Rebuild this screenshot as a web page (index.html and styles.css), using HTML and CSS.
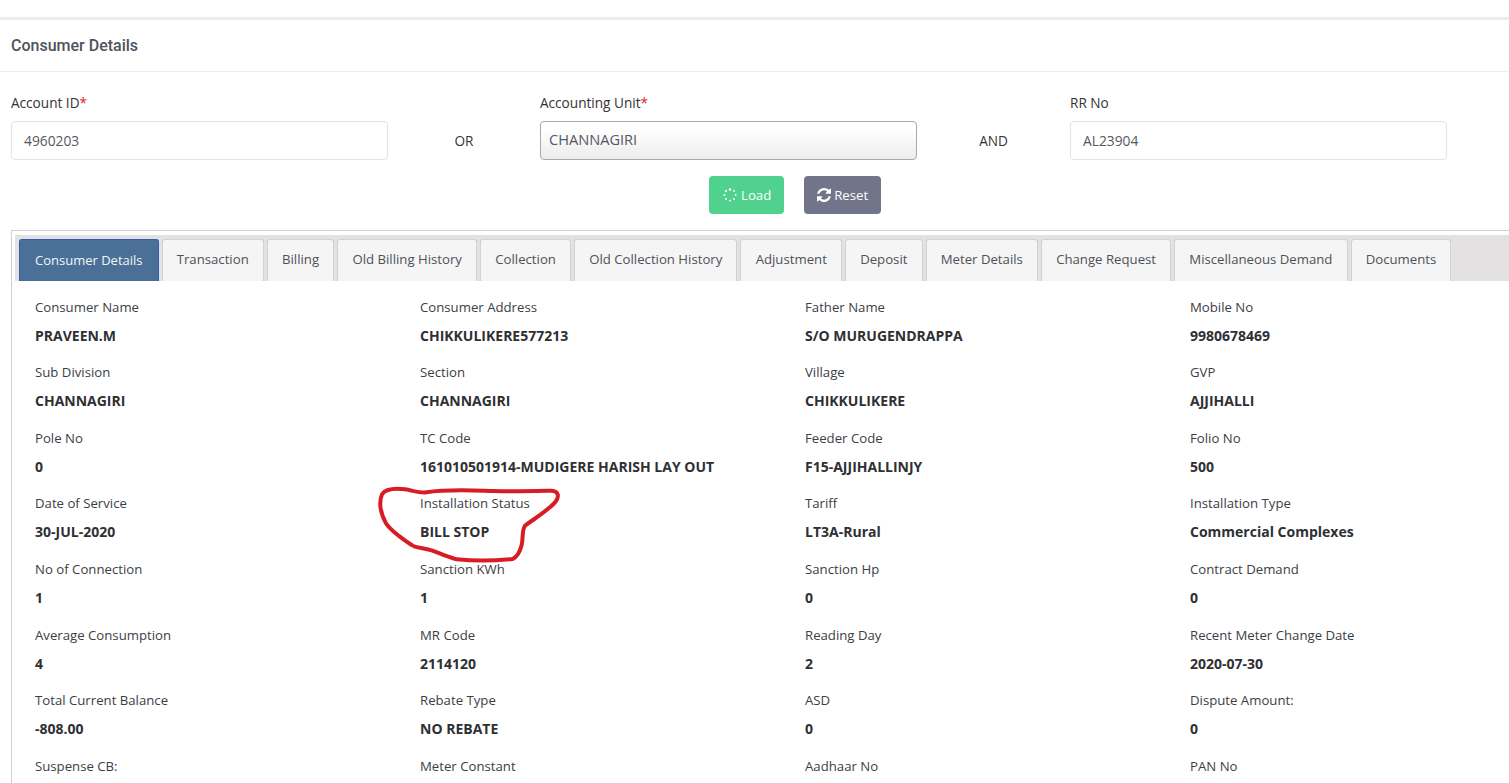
FILE: index.html
```html
<!DOCTYPE html>
<html lang="en">
<head>
<meta charset="utf-8">
<title>Consumer Details</title>
<link rel="stylesheet" href="styles.css">
</head>
<body>
<div class="card">
  <div class="card-head">Consumer Details</div>
  <form class="form">
    <div class="form-row">
      <div class="field">
        <label class="lbl">Account ID<span class="req">*</span></label>
        <div class="input">4960203</div>
      </div>
      <div class="sep">OR</div>
      <div class="field">
        <label class="lbl">Accounting Unit<span class="req">*</span></label>
        <div class="input select">CHANNAGIRI</div>
      </div>
      <div class="sep">AND</div>
      <div class="field">
        <label class="lbl">RR No</label>
        <div class="input">AL23904</div>
      </div>
    </div>
    <div class="actions">
      <button type="button" class="btn load">
        <svg class="ico" viewBox="0 0 16 16"><g fill="#fff"><circle cx="8" cy="1.6" r="1.4"/><circle cx="12.5" cy="3.5" r="1.1"/><circle cx="14.4" cy="8" r="1.1"/><circle cx="12.5" cy="12.5" r="1.1"/><circle cx="8" cy="14.4" r="1.1"/><circle cx="3.5" cy="12.5" r="1.1"/><circle cx="1.6" cy="8" r="1.1"/><circle cx="3.5" cy="3.5" r="1.3"/></g></svg>
        Load</button>
      <button type="button" class="btn reset">
        <svg class="ico" viewBox="0 0 1536 1536"><path fill="#fff" d="M1511 928q0 5-1 7-64 268-268 434.5t-478 166.5q-146 0-282.5-55t-243.5-157l-129 129q-19 19-45 19t-45-19-19-45v-448q0-26 19-45t45-19h448q26 0 45 19t19 45-19 45l-137 137q71 66 161 102t187 36q134 0 250-65t186-179q11-17 53-117 8-23 30-23h192q13 0 22.5 9.5t9.5 22.5zm25-800v448q0 26-19 45t-45 19h-448q-26 0-45-19t-19-45 19-45l138-138q-148-137-349-137-134 0-250 65t-186 179q-11 17-53 117-8 23-30 23h-199q-13 0-22.5-9.5t-9.5-22.5v-7q65-268 270-434.5t480-166.5q146 0 284 55.5t245 156.5l130-129q19-19 45-19t45 19 19 45z"/></svg>
        Reset</button>
    </div>
  </form>
  <section class="tabs-box">
    <ul class="tabs">
      <li class="tab active">Consumer Details</li>
      <li class="tab">Transaction</li>
      <li class="tab">Billing</li>
      <li class="tab">Old Billing History</li>
      <li class="tab">Collection</li>
      <li class="tab">Old Collection History</li>
      <li class="tab">Adjustment</li>
      <li class="tab">Deposit</li>
      <li class="tab">Meter Details</li>
      <li class="tab">Change Request</li>
      <li class="tab">Miscellaneous Demand</li>
      <li class="tab">Documents</li>
    </ul>
    <div class="grid">
      <div class="cell"><span class="k">Consumer Name</span><b class="v">PRAVEEN.M</b></div>
      <div class="cell"><span class="k">Consumer Address</span><b class="v">CHIKKULIKERE577213</b></div>
      <div class="cell"><span class="k">Father Name</span><b class="v">S/O MURUGENDRAPPA</b></div>
      <div class="cell"><span class="k">Mobile No</span><b class="v">9980678469</b></div>
      <div class="cell"><span class="k">Sub Division</span><b class="v">CHANNAGIRI</b></div>
      <div class="cell"><span class="k">Section</span><b class="v">CHANNAGIRI</b></div>
      <div class="cell"><span class="k">Village</span><b class="v">CHIKKULIKERE</b></div>
      <div class="cell"><span class="k">GVP</span><b class="v">AJJIHALLI</b></div>
      <div class="cell"><span class="k">Pole No</span><b class="v">0</b></div>
      <div class="cell"><span class="k">TC Code</span><b class="v">161010501914-MUDIGERE HARISH LAY OUT</b></div>
      <div class="cell"><span class="k">Feeder Code</span><b class="v">F15-AJJIHALLINJY</b></div>
      <div class="cell"><span class="k">Folio No</span><b class="v">500</b></div>
      <div class="cell"><span class="k">Date of Service</span><b class="v">30-JUL-2020</b></div>
      <div class="cell"><span class="k">Installation Status</span><b class="v">BILL STOP</b></div>
      <div class="cell"><span class="k">Tariff</span><b class="v">LT3A-Rural</b></div>
      <div class="cell"><span class="k">Installation Type</span><b class="v">Commercial Complexes</b></div>
      <div class="cell"><span class="k">No of Connection</span><b class="v">1</b></div>
      <div class="cell"><span class="k">Sanction KWh</span><b class="v">1</b></div>
      <div class="cell"><span class="k">Sanction Hp</span><b class="v">0</b></div>
      <div class="cell"><span class="k">Contract Demand</span><b class="v">0</b></div>
      <div class="cell"><span class="k">Average Consumption</span><b class="v">4</b></div>
      <div class="cell"><span class="k">MR Code</span><b class="v">2114120</b></div>
      <div class="cell"><span class="k">Reading Day</span><b class="v">2</b></div>
      <div class="cell"><span class="k">Recent Meter Change Date</span><b class="v">2020-07-30</b></div>
      <div class="cell"><span class="k">Total Current Balance</span><b class="v">-808.00</b></div>
      <div class="cell"><span class="k">Rebate Type</span><b class="v">NO REBATE</b></div>
      <div class="cell"><span class="k">ASD</span><b class="v">0</b></div>
      <div class="cell"><span class="k">Dispute Amount:</span><b class="v">0</b></div>
      <div class="cell"><span class="k">Suspense CB:</span></div>
      <div class="cell"><span class="k">Meter Constant</span></div>
      <div class="cell"><span class="k">Aadhaar No</span></div>
      <div class="cell"><span class="k">PAN No</span></div>
    </div>
  </section>
</div>
<svg class="scribble" viewBox="0 0 660 300"><path d="M155 210C125 190 95 170 78 145C62 115 55 85 66 58C78 40 110 40 135 43C160 47 180 55 200 52C260 42 330 46 400 48C460 50 530 48 575 47C595 48 600 65 585 82C565 105 525 130 495 152C485 165 490 190 485 210C480 230 472 245 458 252C410 257 340 258 290 253C260 245 240 235 215 226C195 220 175 218 162 214"/></svg>
</body>
</html>
```

FILE: styles.css
```css
* { box-sizing: border-box; }
html, body { margin: 0; padding: 0; height: 783px; overflow: hidden; background: #fff; }
body { position: relative; padding-top: 17px; font-family: "Open Sans", "Liberation Sans", sans-serif; font-size: 13.2px; color: #333; }

.card { border-top: 3px solid #ebebeb; }
.card-head { height: 52px; padding: 0 11px; display: flex; align-items: center; border-bottom: 1px solid #ececec; font-family: Roboto, sans-serif; font-weight: 500; font-size: 16px; color: #50525c; }

.form { padding: 20px 11px 0; }
.form-row { display: grid; grid-template-columns: 377px 152px 377px 153px 377px; align-items: start; }
.lbl { display: block; height: 29px; line-height: 22px; font-size: 13.6px; color: #333; }
.req { color: #e0203a; }
.input { height: 39px; line-height: 37px; padding: 0 12px; border: 1px solid #e3e3e6; border-radius: 4px; font-size: 13.8px; color: #55585f; }
.input.select { padding: 0 8px; line-height: 35px; border-color: #a8a8a8; color: #55585f; font-size: 14.6px; background: linear-gradient(#fff 20%, #ececec 100%); }
.sep { padding-top: 38px; text-align: center; line-height: 22px; font-size: 13.6px; color: #333; }

.actions { display: flex; gap: 20px; margin-top: 16px; padding-left: 698px; }
.btn { height: 38px; border: 0; border-radius: 4px; color: #fff; font: inherit; font-size: 13.2px; display: flex; align-items: center; }
.load { padding: 0 13px 0 14px; gap: 4px; background: #50d18d; }
.reset { padding: 0 13px; gap: 3px; background: #72758a; }
.ico { width: 14px; height: 14px; }

.tabs-box { margin: 16px 0 0 11px; border: 1px solid #d0d0d0; border-right: 0; padding: 4px 0 0 3px; }
.tabs { list-style: none; margin: 0; padding: 4px 0 0 4px; height: 46px; display: flex; gap: 3px; background: #e3e1e1; }
.tab { height: 42px; padding: 0 14.15px; line-height: 38px; font-size: 13.2px; background: #f5f5f5; border: 1px solid #d2d2d2; border-bottom: 0; border-radius: 3px 3px 0 0; color: #4f5158; white-space: nowrap; }
.tab.active { padding: 0 15px; line-height: 40px; font-size: 13px; background: #4a7097; border-color: #2f5fa8; color: #f2f5f8; }

.grid { display: grid; grid-template-columns: repeat(4, 385px); padding: 14.6px 0 0 20px; }
.cell { height: 65.6px; display: flex; flex-direction: column; }
.k { line-height: 22px; height: 29px; color: #3c3e44; }
.v { line-height: 22px; font-size: 14px; font-weight: 700; color: #2e3034; }

.scribble { position: absolute; left: 360px; top: 475px; width: 220px; height: 100px; fill: none; stroke: #d81c24; stroke-width: 12; stroke-linecap: round; stroke-linejoin: round; }
```
